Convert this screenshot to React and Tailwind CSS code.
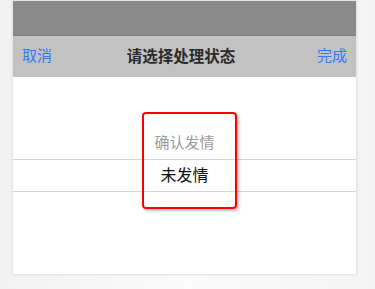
import React from 'react';

const font = { fontFamily: '"Liberation Sans", "Noto Sans CJK SC", sans-serif' };

export default function App() {
    return (
        <div className="w-[375px] h-[289px] bg-gradient-to-r from-[#f2f2f2] via-[#fbfbfb] to-[#f4f4f4] overflow-hidden" style={font}>
            <div className="relative ml-[12px] w-[345px] h-[275px] bg-white border border-[#e6e6e6] shadow-[0_0_3px_rgba(0,0,0,0.08)] flex flex-col">
                {/* dimmed page behind the sheet */}
                <div className="h-[35px] bg-[#8a8a8a] border-b border-[#7f7f7f]" />

                {/* toolbar */}
                <div className="h-[41px] bg-[#c2c2c2] flex items-center justify-between px-[9px]">
                    <span className="text-[15px] text-[#3478f6]">取消</span>
                    <span className="text-[15.5px] font-bold text-[#2b2b2b] pr-[7px]">请选择处理状态</span>
                    <span className="text-[15px] text-[#3478f6]">完成</span>
                </div>

                {/* picker */}
                <div className="flex-1 flex flex-col pt-[50px]">
                    <div className="h-[32px] flex items-center justify-center text-[15px] text-[#9a9a9a]">确认发情</div>
                    <div className="h-[33px] flex items-center justify-center text-[16px] text-[#111] border-y border-[#d6d6d6]">未发情</div>
                </div>

                {/* highlight box */}
                <div className="absolute left-[129px] top-[111px] w-[95px] h-[97px] border-2 border-[#ff0000] rounded-[4px] shadow-[2px_2px_3px_rgba(0,0,0,0.25)]" />
            </div>
        </div>
    );
}
